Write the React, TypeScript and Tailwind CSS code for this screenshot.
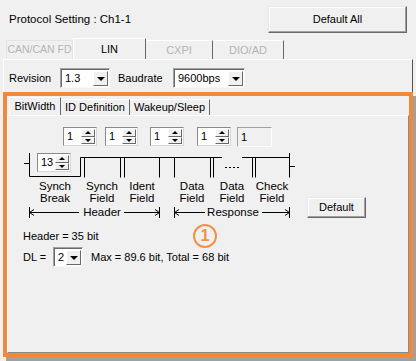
import React from "react";

// small classic-Windows style pieces

const TriUp = () => (
  <span className="block w-0 h-0 border-l-[3px] border-r-[3px] border-b-[3px] border-l-transparent border-r-transparent border-b-black" />
);

const TriDown = ({ big }: { big?: boolean }) =>
  big ? (
    <span className="block w-0 h-0 border-l-[4px] border-r-[4px] border-t-[4px] border-l-transparent border-r-transparent border-t-black" />
  ) : (
    <span className="block w-0 h-0 border-l-[3px] border-r-[3px] border-t-[3px] border-l-transparent border-r-transparent border-t-black" />
  );

const Combo = ({ value, w }: { value: string; w: string }) => (
  <div
    className={`${w} h-[20px] flex bg-white border border-t-[#a0a0a0] border-l-[#a0a0a0] border-r-[#f8f8f8] border-b-[#f8f8f8] shadow-[inset_1px_1px_0_#696969]`}
  >
    <span className="flex-1 pl-[4px] pt-[1px] leading-[17px] text-[11px]">{value}</span>
    <div className="w-[15px] mt-[2px] mb-[1px] mr-[1px] bg-[#f0f0f0] border border-t-white border-l-white border-r-[#696969] border-b-[#696969] flex items-center justify-center">
      <TriDown big />
    </div>
  </div>
);

const Spin = ({ value, className }: { value: string; className: string }) => (
  <div
    className={`absolute h-[19px] flex bg-white border border-t-[#8a8a8a] border-l-[#8a8a8a] border-r-[#d8d8d8] border-b-[#d8d8d8] ${className}`}
  >
    <span className="flex-1 pl-[3px] leading-[17px] text-[11px]">{value}</span>
    <div className="w-[14px] my-[1px] mr-[1px] flex flex-col bg-[#f0f0f0]">
      <div className="flex-1 flex items-center justify-center border border-t-white border-l-white border-r-[#696969] border-b-[#696969]">
        <TriUp />
      </div>
      <div className="flex-1 flex items-center justify-center border border-t-white border-l-white border-r-[#696969] border-b-[#696969]">
        <TriDown />
      </div>
    </div>
  </div>
);

const Diagram = () => (
  <div className="relative w-[299px] h-[96px] shrink-0">
    <svg
      width="299"
      height="96"
      viewBox="8 125 299 96"
      className="absolute left-0 top-0"
      fill="none"
      stroke="#000"
      strokeWidth="1"
    >
      {/* frame */}
      <path d="M24 163.5H29.5M29.5 153V176.5H80.5V157.5H222" />
      <path d="M242 157.5H289.5M289.5 153V177.5M289.5 166.5H295" />
      <path d="M225 167.5H240" strokeDasharray="2 2" />
      {/* field borders */}
      <path d="M84.5 157.5V177.5M120.5 157.5V177.5M124.5 157.5V177.5M159.5 157.5V177.5M174.5 157.5V177.5M210.5 157.5V177.5M213.5 157.5V177.5M252.5 157.5V177.5M255.5 157.5V177.5" />
      {/* header arrow */}
      <path d="M29.5 207V218M29.5 212.5H79M29.5 212.5L34 209.5M29.5 212.5L34 215.5" />
      <path d="M124 212.5H159.5M159.5 207V218M159.5 212.5L155 209.5M159.5 212.5L155 215.5" />
      {/* response arrow */}
      <path d="M174.5 207V218M174.5 212.5H205M174.5 212.5L179 209.5M174.5 212.5L179 215.5" />
      <path d="M262 212.5H289.5M289.5 207V218M289.5 212.5L285 209.5M289.5 212.5L285 215.5" />
      <g
        fill="#000"
        stroke="none"
        fontFamily="'Liberation Sans', Arial, sans-serif"
        fontSize="11.5"
        textAnchor="middle"
      >
        <text x="55" y="190">Synch</text>
        <text x="55" y="202">Break</text>
        <text x="102" y="190">Synch</text>
        <text x="102" y="202">Field</text>
        <text x="142" y="190">Ident</text>
        <text x="142" y="202">Field</text>
        <text x="192" y="190">Data</text>
        <text x="192" y="202">Field</text>
        <text x="232" y="190">Data</text>
        <text x="232" y="202">Field</text>
        <text x="272" y="190">Check</text>
        <text x="272" y="202">Field</text>
        <text x="102" y="216">Header</text>
        <text x="233" y="216">Response</text>
      </g>
    </svg>
    <Spin value="13" className="left-[29px] top-[28px] w-[34px]" />
    <Spin value="1" className="left-[55px] top-[2px] w-[34px]" />
    <Spin value="1" className="left-[97px] top-[2px] w-[33px]" />
    <Spin value="1" className="left-[142px] top-[2px] w-[34px]" />
    <Spin value="1" className="left-[189px] top-[2px] w-[34px]" />
    <div className="absolute left-[229px] top-[2px] w-[35px] h-[20px] bg-[#f0f0f0] border border-t-[#a0a0a0] border-l-[#a0a0a0] border-r-white border-b-white pl-[3px] leading-[18px] text-[11px]">
      1
    </div>
  </div>
);

const App = () => {
  return (
    <div className="w-[416px] h-[361px] bg-[#f0f0f0] overflow-hidden text-[11px] text-black font-['Liberation_Sans',Arial,sans-serif]">
      {/* header */}
      <div className="flex items-center justify-between pl-[9px] pr-[9px] pt-[6px]">
        <span className="text-[11.5px]">Protocol Setting : Ch1-1</span>
        <button className="w-[139px] h-[27px] bg-[#f0f0f0] border border-t-[#e8e8e8] border-l-[#e8e8e8] border-r-[#696969] border-b-[#696969] shadow-[inset_-1px_-1px_0_#a0a0a0,inset_1px_1px_0_#fff] text-[11px]">
          Default All
        </button>
      </div>

      {/* protocol tabs */}
      <div className="flex items-end h-[21px] mt-[5px] pl-[6px]">
        <div className="w-[67px] h-[19px] flex items-center justify-center whitespace-nowrap border border-[#e4e4e4] border-b-0 text-[10.5px] text-[#b4b4b4]">
          CAN/CAN FD
        </div>
        <div className="w-[73px] h-[21px] flex items-center justify-center border-t border-l border-r border-t-white border-l-white border-r-[#696969]">
          LIN
        </div>
        <div className="w-[67px] h-[19px] flex items-center justify-center border-t border-r border-t-white border-r-[#696969] text-[#b4b4b4]">
          CXPI
        </div>
        <div className="w-[71px] h-[19px] flex items-center justify-center border-t border-r border-t-white border-r-[#696969] text-[#b4b4b4]">
          DIO/AD
        </div>
      </div>

      <div className="ml-[3px] w-[410px]">
        {/* revision row */}
        <div className="h-[33px] border-t border-l border-r border-t-white border-l-white border-r-[#505050] pt-[8px] pl-[5px]">
          <div className="flex items-center h-[20px]">
            <span className="w-[51px]">Revision</span>
            <Combo value="1.3" w="w-[50px]" />
            <span className="w-[63px] pl-[8px]">Baudrate</span>
            <Combo value="9600bps" w="w-[72px]" />
          </div>
        </div>

        {/* highlighted area */}
        <div className="h-[265px] flex flex-col border-4 border-[#ef8a3d] shadow-[3px_4px_0_0_#a0a0a0]">
          <div className="flex items-end h-[19px] pt-[1px] pl-[2px]">
            <div className="w-[52px] h-[18px] flex items-center justify-center border-t border-l border-r border-t-white border-l-white border-r-[#696969]">
              BitWidth
            </div>
            <div className="w-[69px] h-[16px] flex items-center justify-center border-t border-r border-t-white border-r-[#696969]">
              ID Definition
            </div>
            <div className="w-[80px] h-[16px] flex items-center justify-center border-t border-r border-t-white border-r-[#696969]">
              Wakeup/Sleep
            </div>
          </div>

          <div className="relative flex-1 border border-t-white border-l-white border-r-[#8a8a8a] border-b-[#8a8a8a]">
            <div className="flex mt-[9px]">
              <Diagram />
              <button className="mt-[72px] w-[59px] h-[21px] bg-[#f0f0f0] border border-t-[#e8e8e8] border-l-[#e8e8e8] border-r-[#696969] border-b-[#696969] shadow-[inset_-1px_-1px_0_#a0a0a0,inset_1px_1px_0_#fff] text-[11px]">
                Default
              </button>
            </div>
            <div className="pl-[15px] mt-[8px] h-[14px] leading-[14px]">Header = 35 bit</div>
            <div className="pl-[15px] mt-[4px] h-[20px] flex items-center">
              <span className="w-[30px]">DL =</span>
              <Combo value="2" w="w-[30px]" />
              <span className="ml-[8px]">Max = 89.6 bit, Total = 68 bit</span>
            </div>

            <div className="absolute left-[185px] top-[108px] w-[24px] h-[24px] rounded-full border-2 border-[#f0914a] flex items-center justify-center text-[16px] font-bold leading-none text-[#f0914a]">
              1
            </div>
          </div>
        </div>
      </div>
    </div>
  );
};

export default App;
